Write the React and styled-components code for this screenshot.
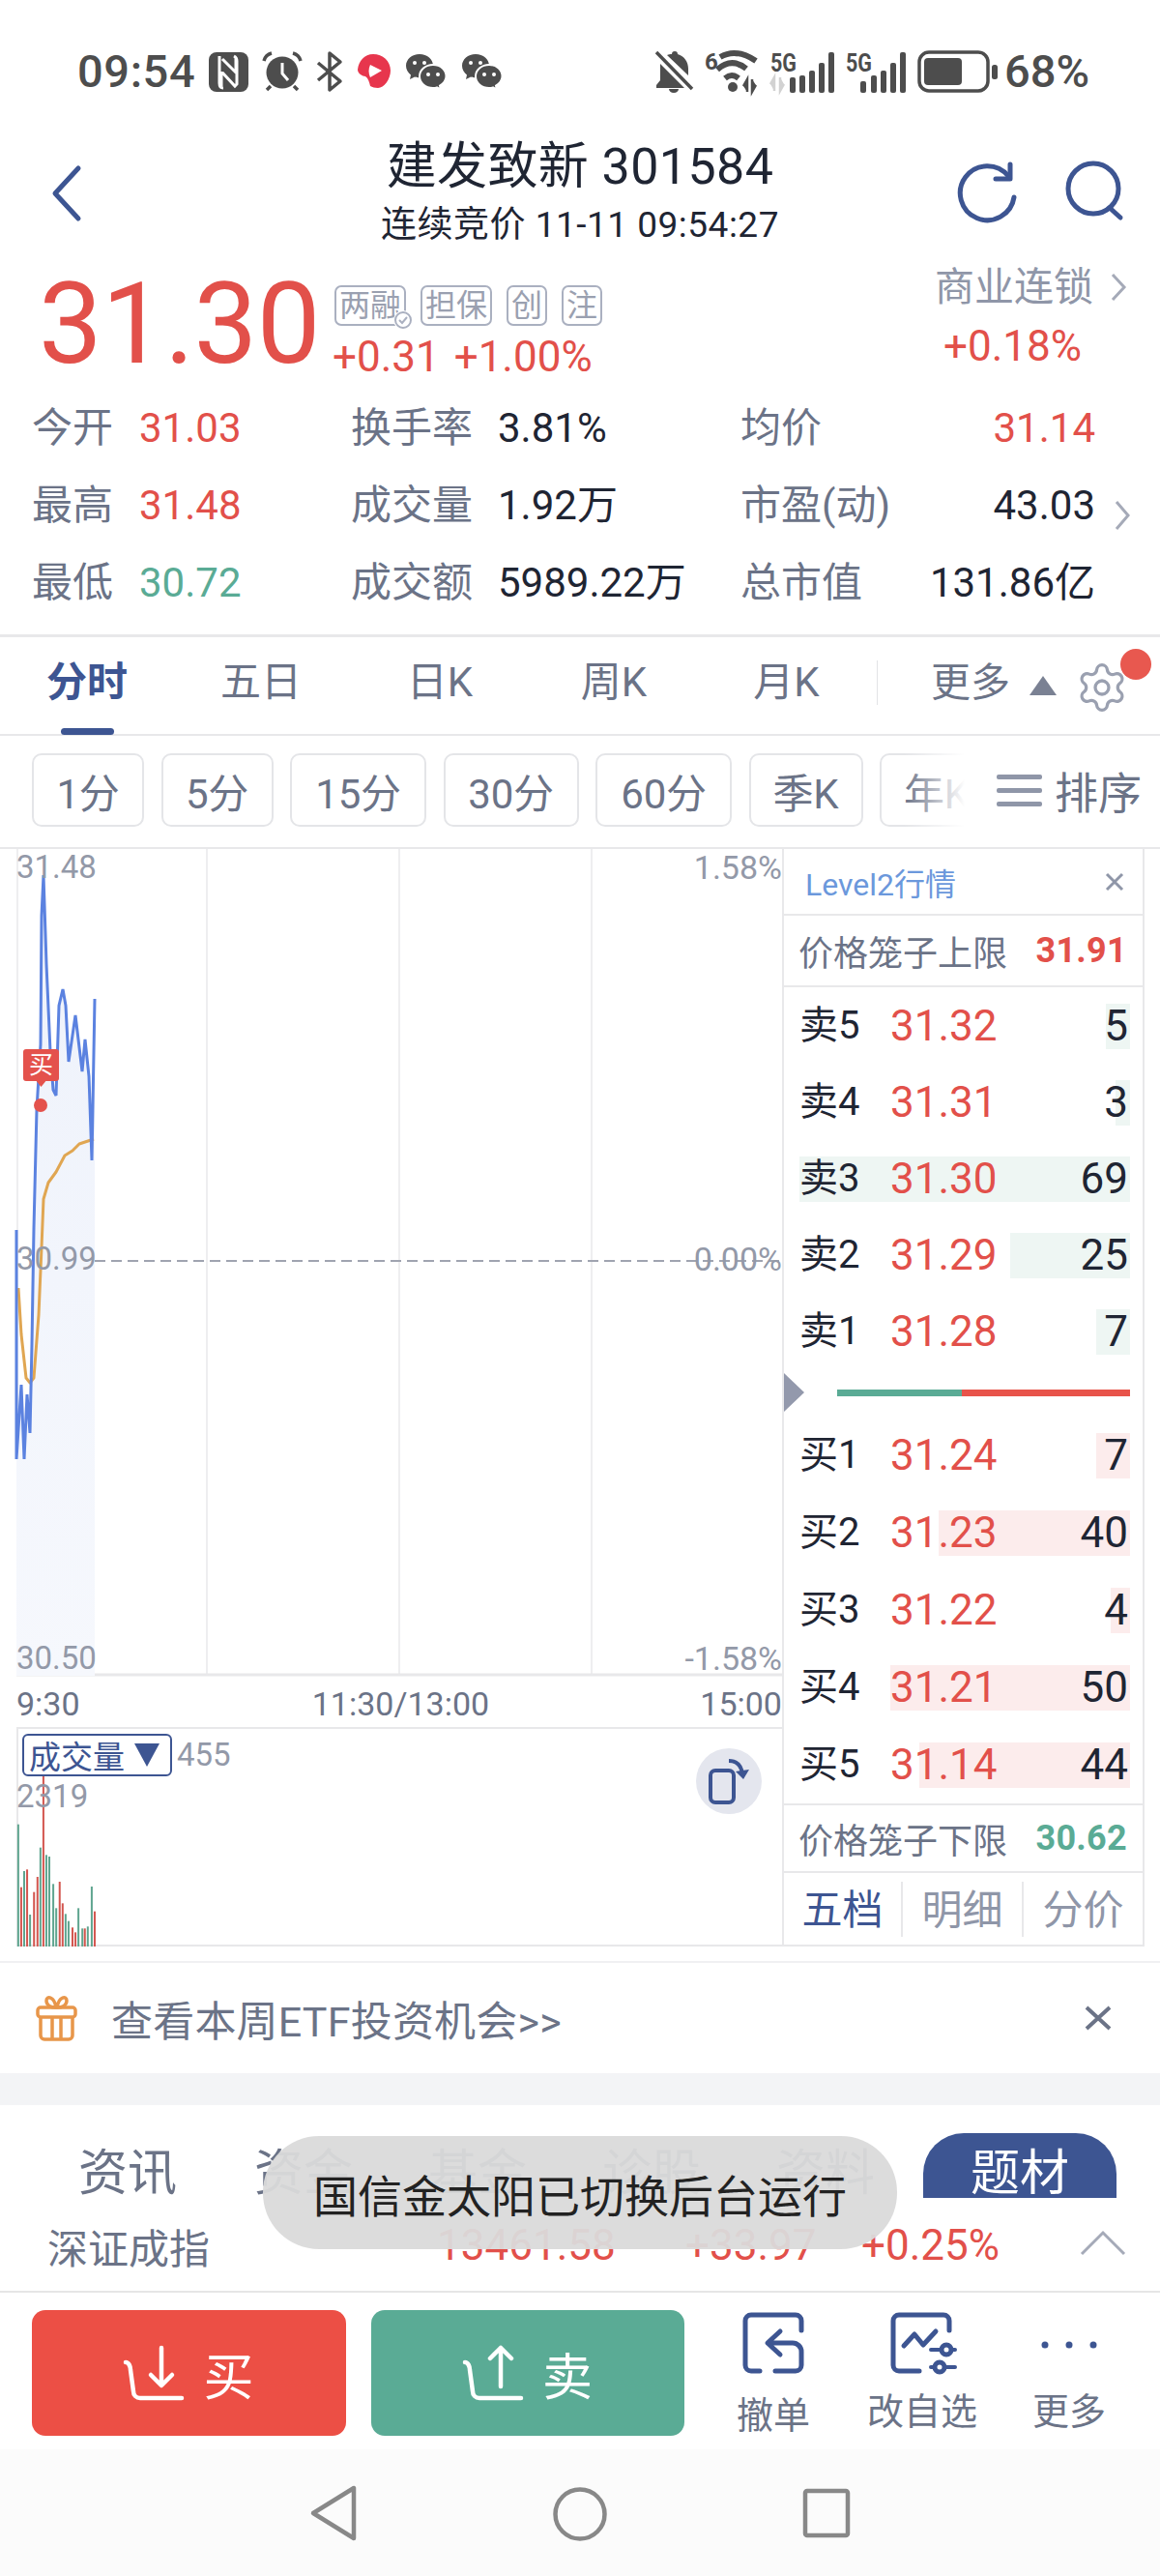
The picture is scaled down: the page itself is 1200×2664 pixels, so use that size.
import React from 'react';
import styled, { createGlobalStyle } from 'styled-components';
import { Settings } from 'lucide-react';

const BLUE = '#3d5592';
const RED = '#e2504a';
const GREEN = '#5aab95';
const GRAY = '#6b7387';
const LIGHT = '#9399a8';
const DARK = '#1f2533';
const LINE = '#e8e8ea';
const ICON = '#4d4d4d';

const Global = createGlobalStyle`
  html, body { margin: 0; padding: 0; background: #fff; }
  * { box-sizing: border-box; }
  body { font-family: Roboto, "Noto Sans CJK SC", sans-serif; }
  svg { overflow: visible; }
`;

const Page = styled.div`
  position: relative; width: 1200px; height: 2664px; overflow: hidden; background: #fff;
`;

/* status bar */
const StatusBar = styled.div`
  height: 148px; padding: 0 73px 0 80px; display: flex; align-items: center; justify-content: space-between; color: ${ICON};
`;
const StatusGroup = styled.div`display: flex; align-items: center; gap: ${p => p.$gap || 14}px;`;
const StatusText = styled.span`
  font-size: 47px; line-height: 50px; font-weight: 500; letter-spacing: ${p => p.$spacing || 0}px; margin-left: ${p => p.$ml || 0}px; color: ${ICON};
`;

/* navigation */
const NavRow = styled.div`position: relative; height: 112px; display: flex; justify-content: center;`;
const TitleBlock = styled.div`display: flex; flex-direction: column; align-items: center;`;
const Title = styled.div`font-size: 52px; line-height: 50px; color: ${DARK}; letter-spacing: .4px; white-space: nowrap;`;
const Subtitle = styled.div`font-size: 37px; line-height: 40px; margin-top: 15px; color: ${DARK}; letter-spacing: .5px; white-space: nowrap;`;
const NavIcon = styled.svg`position: absolute; top: ${p => p.$top}px; left: ${p => p.$left}px; fill: none; stroke: ${BLUE}; stroke-width: 5; stroke-linecap: round; stroke-linejoin: round;`;

/* quote */
const Quote = styled.div`position: relative; height: 142px; padding-left: 40px; display: flex;`;
const BigPrice = styled.div`font-size: 117px; line-height: 150px; color: ${RED}; letter-spacing: -.6px; width: 306px;`;
const QuoteMid = styled.div`padding-top: 35px; display: flex; flex-direction: column;`;
const Badges = styled.div`display: flex; gap: 15px; height: 42px;`;
const Badge = styled.span`
  position: relative; height: 42px; padding: 0 3px; display: flex; align-items: center; border: 2px solid #aab0c0; border-radius: 7px;
  font-size: 32px; line-height: 1; color: #9aa0b0; white-space: nowrap;
`;
const BadgeCheck = styled.svg`position: absolute; right: -9px; bottom: -6px; background: #fff; border-radius: 50%;`;
const Change = styled.div`margin-top: 7px; margin-left: -2px; font-size: 44px; line-height: 50px; color: ${RED}; word-spacing: 4px;`;
const Sector = styled.div`position: absolute; right: 0; top: 14px; width: 232px;`;
const SectorName = styled.div`display: flex; align-items: center; font-size: 41px; line-height: 46px; color: #8f96a8; gap: 18px; margin-left: -1px;`;
const SectorChange = styled.div`margin-top: 15px; padding-left: 8px; font-size: 44px; line-height: 46px; color: ${RED};`;
const Chevron = styled.svg`fill: none; stroke: #a5aab8; stroke-width: 3; flex: none;`;

/* stats */
const Stats = styled.div`padding: 1px 0 13px 33px; border-bottom: 3px solid ${LINE};`;
const StatRow = styled.div`display: flex; height: 80px; align-items: center; font-size: 42px; line-height: 50px;`;
const StatCell = styled.div`display: flex; align-items: center; width: ${p => p.$w}px; flex: none; justify-content: ${p => p.$between ? 'space-between' : 'flex-start'};`;
const StatLabel = styled.span`width: ${p => p.$w ? p.$w + 'px' : 'auto'}; height: 50px; color: ${GRAY}; flex: none;`;
const StatValue = styled.span`height: 50px; color: ${p => p.$c || DARK}; white-space: nowrap;`;
const StatChevron = styled(Chevron)`margin: 20px 0 0 20px;`;

/* period tabs */
const PeriodTabs = styled.div`height: 102px; border-bottom: 2px solid ${LINE}; display: flex; align-items: center; padding-bottom: 6px; position: relative;`;
const PeriodGrid = styled.div`display: grid; grid-template-columns: 180px 180px 190px 170px 187px; flex: none;`;
const Period = styled.div`
  position: relative; text-align: center; font-size: 42px; line-height: 56px; color: ${p => p.$on ? BLUE : GRAY}; font-weight: ${p => p.$on ? 700 : 400};
`;
const ActiveMark = styled.i`position: absolute; left: 63px; bottom: -26px; width: 55px; height: 7px; border-radius: 4px; background: ${BLUE};`;
const VSep = styled.i`width: 1px; height: 46px; background: #e2e3e6; flex: none;`;
const More = styled.div`margin-left: 55px; font-size: 41px; color: ${GRAY}; line-height: 56px;`;
const UpTri = styled.i`margin-left: 20px; margin-top: 6px; width: 0; height: 0; border-left: 14px solid transparent; border-right: 14px solid transparent; border-bottom: 20px solid ${GRAY}; opacity: .9;`;
const Gear = styled.div`margin-left: 19px; margin-top: 10px; color: #9aa0b0; display: flex;`;
const RedDot = styled.i`position: absolute; left: 1159px; top: 12px; width: 32px; height: 32px; border-radius: 50%; background: #e8584f;`;

/* chips */
const ChipRow = styled.div`height: 117px; padding: 18px 0 0 33px; display: flex; border-bottom: 2px solid ${LINE};`;
const ChipClip = styled.div`
  position: relative; width: 972px; height: 78px; overflow: hidden; display: flex; gap: 17.500px; flex: none;
  &::after { content: ''; position: absolute; top: 0; bottom: 0; right: 0; width: 70px; background: linear-gradient(to right, rgba(255,255,255,0), #fff 90%); }
`;
const Chip = styled.div`
  flex: none; width: ${p => p.$w}px; height: 76px; border: 2px solid #e4e5e8; border-radius: 10px; display: flex; align-items: center; justify-content: center;
  font-size: 42px; color: ${GRAY}; letter-spacing: -.3px;
`;
const Sort = styled.div`margin-left: 26px; height: 76px; display: flex; align-items: center; gap: 13px; font-size: 45px; color: ${GRAY}; white-space: nowrap;`;
const SortLines = styled.div`
  width: 47px; display: flex; flex-direction: column; gap: 9px;
  & > i { height: 5px; background: #8f96a8; border-radius: 2px; }
`;

/* chart + book */
const Market = styled.div`height: 1152px; padding: 0 16px 15px 17px; display: flex; border-bottom: 2px solid #f0f0f2;`;
const ChartCol = styled.div`width: 792px; flex: none; display: flex; flex-direction: column;`;
const PriceChart = styled.div`position: relative; height: 855px; flex: none;`;
const ChartSvg = styled.svg`display: block;`;
const Axis = styled.span`
  position: absolute; font-size: ${p => p.$right ? 34 : 33}px; line-height: 36px; color: ${LIGHT};
  top: ${p => p.$top}px; ${p => p.$right ? 'right: 0;' : 'left: 0;'}
`;
const BuyTag = styled.div`
  position: absolute; left: 7px; top: 207px; width: 37px; height: 33px; background: #e4524c; border-radius: 3px; color: #fff;
  font-size: 25px; line-height: 33px; text-align: center;
  &::after { content: ''; position: absolute; left: 12px; top: 31px; width: 13px; height: 8px; background: #e4524c; clip-path: polygon(0 0, 100% 0, 50% 100%); }
`;
const TimeAxis = styled.div`height: 53px; display: flex; justify-content: space-between; align-items: center; font-size: 34px; color: ${GRAY}; padding-top: 4px;`;
const AxisMid = styled.span`margin-left: 22px;`;
const VolumeBox = styled.div`position: relative; height: 227px; flex: none;`;
const VolumeSelect = styled.div`
  position: absolute; left: 6px; top: 7px; width: 155px; height: 44px; border: 2px solid ${BLUE}; border-radius: 6px; background: #fff;
  display: flex; align-items: center; padding-left: 5px; gap: 10px; font-size: 33px; color: ${BLUE};
`;
const DownTri = styled.i`flex: none; width: 0; height: 0; border-left: 13px solid transparent; border-right: 13px solid transparent; border-top: 24px solid ${BLUE};`;
const VolLabel = styled.span`position: absolute; left: ${p => p.$left}px; top: ${p => p.$top}px; font-size: 33px; line-height: 36px; color: ${LIGHT};`;
const RotateBtn = styled.div`position: absolute; left: 703px; top: 22px; width: 68px; height: 68px; border-radius: 50%; background: #e4e6ee; display: flex; align-items: center; justify-content: center;`;

const Book = styled.div`width: 375px; height: 1135px; flex: none; border: solid ${LINE}; border-width: 0 2px 2px 2px; display: flex; flex-direction: column;`;
const BookHead = styled.div`height: 69px; padding: 0 19px 0 22px; display: flex; align-items: center; justify-content: space-between; border-bottom: 2px solid ${LINE}; font-size: 32px; color: #6b98dc;`;
const LimitRow = styled.div`height: ${p => p.$h}px; padding: 0 16px 0 15px; display: flex; align-items: center; justify-content: space-between; flex: none; border-bottom: 2px solid ${LINE}; border-top: ${p => p.$top ? `2px solid ${LINE}` : 'none'}; font-size: 36px; color: ${GRAY};`;
const LimitValue = styled.span`font-size: 36px; font-weight: 700; letter-spacing: .3px; color: ${p => p.$c};`;
const Level = styled.div`position: relative; height: ${p => p.$h}px; flex: none; padding: 0 15px 0 16px; display: flex; align-items: center; color: ${DARK};`;
const LevelBar = styled.i`position: absolute; right: 13px; top: 50%; height: 47px; margin-top: -23px; background: ${p => p.$sell ? '#eef6f3' : '#fcecec'};`;
const LevelName = styled.span`position: relative; width: 94px; flex: none; font-size: 40px; line-height: 48px;`;
const LevelPrice = styled.span`position: relative; font-size: 44px; line-height: 48px; color: ${RED};`;
const LevelQty = styled.span`position: relative; margin-left: auto; font-size: 44px; line-height: 48px;`;
const Ratio = styled.div`position: relative; height: 49px; flex: none; padding-left: 55px; padding-right: 13px; display: flex; align-items: center;`;
const RatioTri = styled.i`position: absolute; left: 0; top: 4px; width: 0; height: 0; border-top: 20px solid transparent; border-bottom: 20px solid transparent; border-left: 21px solid #9399ac;`;
const RatioPart = styled.i`height: 7px; background: ${p => p.$c}; flex: ${p => p.$f};`;
const BookTabs = styled.div`flex: 1; display: grid; grid-template-columns: 123px 125px 1fr; align-items: center;`;
const BookTab = styled.div`height: 57px; font-size: 42px; line-height: 60px; text-align: center; color: ${p => p.$on ? BLUE : '#8f96a8'}; border-right: ${p => p.$sep ? `2px solid ${LINE}` : 'none'};`;

/* banner */
const Banner = styled.div`height: 114px; padding: 0 50px 0 37px; display: flex; align-items: center; font-size: 43px; color: ${GRAY};`;
const BannerText = styled.span`margin-left: 35px; flex: 1; letter-spacing: .2px;`;
const GrayBand = styled.div`height: 33px; background: #f3f4f6;`;

/* info tabs */
const InfoTabs = styled.div`position: relative; height: 96px; overflow: hidden; font-size: 51px; color: ${GRAY};`;
const InfoTabRow = styled.div`display: grid; grid-template-columns: 182px 180px 180px 180px 180px 1fr; padding-left: 81px; padding-top: 46px; line-height: 50px;`;
const Pill = styled.div`margin: -17px 45px 0 -28px; height: 67px; padding-top: 17px; background: ${BLUE}; color: #fff; border-radius: 42px 42px 0 0; text-align: center;`;
const IndexRow = styled.div`height: 98px; padding: 2px 35px 0 49px; display: flex; align-items: center; font-size: 44px; color: ${RED}; border-bottom: 2px solid #e6e6e6; background: #fff;`;
const IndexName = styled.span`width: 403px; font-size: 42px; color: ${GRAY}; flex: none;`;
const IndexValue = styled.span`width: ${p => p.$w}px; flex: none; white-space: nowrap;`;
const UpChevron = styled.svg`margin-left: auto; fill: none; stroke: #a5aab8; stroke-width: 3; margin-top: -4px;`;

/* toast */
const Toast = styled.div`
  position: absolute; left: 272px; top: 2209px; width: 656px; height: 117px; border-radius: 58px; background: rgba(218,218,218,.95);
  display: flex; align-items: center; justify-content: center; font-size: 46px; color: #222;
`;

/* trade bar */
const TradeBar = styled.div`height: 162px; padding: 18px 0 0 33px; display: flex;`;
const TradeBtn = styled.div`
  width: ${p => p.$w}px; height: 130px; flex: none; margin-right: ${p => p.$mr}px; border-radius: 14px; background: ${p => p.$c};
  display: flex; align-items: center; justify-content: center; gap: 18px; font-size: 52px; color: #fff;
`;
const TradeItem = styled.div`width: ${p => p.$w}px; flex: none; margin-left: ${p => p.$ml || 0}px; display: flex; flex-direction: column; align-items: center; font-size: 38px; line-height: 46px; color: ${GRAY}; white-space: nowrap;`;
const TradeIcon = styled.svg`height: 68px; fill: none; stroke: ${BLUE}; stroke-width: 5; stroke-linecap: round; stroke-linejoin: round; margin-bottom: ${p => p.$mb}px;`;

/* nav */
const SystemNav = styled.div`height: 131px; background: #fbfbfb; position: relative;`;
const SysIcon = styled.svg`position: absolute; left: ${p => p.$left}px; top: ${p => p.$top}px; fill: none; stroke: #888; stroke-width: 4.5; stroke-linejoin: round;`;

const pricePts = [[17,1272],[17,1509],[22,1432],[25,1509],[28,1442],[31,1482],[33,1390],[35,1270],[38,1147],[42,1080],[43,947],[45,905],[48,997],[52,1087],[55,1127],[58,1133],[61,1040],[65,1023],[68,1040],[71,1098],[78,1050],[85,1108],[88,1075],[92,1113],[95,1200],[98,1033]];
const avgPts = [[19,1332],[22,1380],[27,1425],[31,1430],[35,1425],[40,1360],[43,1290],[45,1240],[50,1223],[58,1212],[67,1195],[75,1190],[82,1183],[97,1178]];
const toStr = a => a.map(p => p.join(',')).join(' ');

const bars = [[37,560,'g'],[43,755,'r'],[49,705,'g'],[55,700,'r'],[61,840,'g'],[69,770,'r'],[76,723,'r'],[82,632,'g'],[88,400,'r'],[94,655,'g'],[100,660,'g'],[108,745,'g'],[114,820,'g'],[121,738,'r'],[127,805,'r'],[133,838,'g'],[139,860,'g'],[147,880,'r'],[153,895,'r'],[159,820,'g'],[167,883,'g'],[172,883,'r'],[178,877,'g'],[186,753,'g'],[192,830,'r']];

const sells = [['卖5','31.32','5',25],['卖4','31.31','3',15],['卖3','31.30','69',342],['卖2','31.29','25',124],['卖1','31.28','7',35]];
const buys = [['买1','31.24','7',35],['买2','31.23','40',198],['买3','31.22','4',20],['买4','31.21','50',248],['买5','31.14','44',218]];

const Wechat = () => (
  <svg width="44" height="38" viewBox="0 0 44 38">
    <path d="M15 1C7 1 1 6.500 1 13c0 4 2 7 5 9.500L5 27l5-2.500c2 .6 3 .8 5 .8C23 25.300 29 20 29 13S23 1 15 1Z" fill={ICON} />
    <path d="M29 12c-8 0-14 5.500-14 12s6 12 14 12c1.600 0 2.800-.2 4-.6l4 2.300-1-4c3.500-2.200 6.500-5.500 6.500-9.700C42.500 17.500 37 12 29 12Z" fill={ICON} stroke="#fff" strokeWidth="2" />
    <circle cx="10" cy="10" r="2" fill="#fff" /><circle cx="20" cy="10" r="2" fill="#fff" />
    <circle cx="24" cy="22" r="2" fill="#fff" /><circle cx="34" cy="22" r="2" fill="#fff" />
  </svg>
);

const Signal = ({ dim }) => (
  <svg width={dim ? 67 : 63} height="44" viewBox={dim ? '0 0 67 44' : '0 0 63 44'}>
    <text x="0" y="22" fontFamily="Roboto" fontWeight="700" fontSize="26" fill={ICON} textLength="27" lengthAdjust="spacingAndGlyphs">5G</text>
    {dim && <path d="M4 42V28l-4 7M10 28v14l4-7" fill="#d2d2d2" stroke="#d2d2d2" strokeWidth="2.500" />}
    {(dim ? [20,30,40,50,60] : [15,26,36,46,56]).map((x, i) => {
      const top = dim ? [28,26,21,13,2][i] : [32,26,21,13,2][i];
      return <rect key={x} x={x} y={top} width="6" height={44 - top} rx="2" fill={ICON} />;
    })}
  </svg>
);

export default function App() {
  return (
    <Page>
      <Global />
      <StatusBar>
        <StatusGroup $gap={14}>
          <StatusText $spacing={.6}>09:54</StatusText>
          <svg width="41" height="41" viewBox="0 0 41 41">
            <rect width="41" height="41" rx="8" fill={ICON} />
            <path d="M11 4v28c0 3 1 5 4 5M14 7l14 14v-16M13 20v15M14 21l13 14 2-2V9c0-3-1-4-3-5" fill="none" stroke="#fff" strokeWidth="3" />
          </svg>
          <svg width="42" height="42" viewBox="0 0 42 42">
            <circle cx="21" cy="22" r="16.500" fill={ICON} />
            <path d="M21 12v11l6 7" fill="none" stroke="#fff" strokeWidth="3" />
            <path d="M2 10c1-4 4-7 8-8M40 10c-1-4-4-7-8-8M9 36l-4 4M33 36l4 4" fill="none" stroke={ICON} strokeWidth="3.500" />
          </svg>
          <svg width="28" height="42" viewBox="0 0 28 42">
            <path d="M2 12l23 19-11 9V2l11 9L2 30" fill="none" stroke={ICON} strokeWidth="3.500" strokeLinejoin="round" />
          </svg>
          <svg width="36" height="38" viewBox="0 0 36 38">
            <path d="M17 1c10 0 18 7 18 17 0 9-7 18-13 18-3 0-6-1-8-2-1-4-2-8-5-10-3 0-8-3-8-7C2 8 8 1 17 1Z" fill="#e7364d" />
            <path d="M14 12l12 6-12 7c-2-4-2-9 0-13Z" fill="#fff" />
          </svg>
          <Wechat />
          <Wechat />
        </StatusGroup>
        <StatusGroup $gap={11}>
          <svg width="40" height="44" viewBox="0 0 40 44">
            <path d="M20 1c2 0 3 1 3 3 7 2 11 8 11 15v7L12 5c2-1 3-1 5-1 0-2 1-3 3-3ZM5 14l25 25H1v-3l4-5V14ZM14 40h10c0 2-2 4-5 4s-5-2-5-4Z" fill={ICON} />
            <path d="M1 2l37 38" stroke={ICON} strokeWidth="3.500" /><path d="M5 0l37 38" stroke="#fff" strokeWidth="2" />
          </svg>
          <svg width="57" height="44" viewBox="0 0 57 44">
            <text x="0" y="20" fontFamily="Roboto" fontWeight="700" fontSize="24" fill={ICON}>6</text>
            <path d="M16 7c10-6 22-6 37 4M13 20c10-9 20-9 30-1M21 29c5-4 9-4 14 0" fill="none" stroke={ICON} strokeWidth="6" />
            <circle cx="29" cy="38" r="5" fill={ICON} />
            <path d="M44 43V30l-4 7M49 30v13l4-7" fill={ICON} stroke={ICON} strokeWidth="2.500" />
          </svg>
          <Signal dim />
          <Signal />
          <svg width="84" height="44" viewBox="0 0 84 44">
            <rect x="2" y="2" width="71" height="40" rx="10" fill="none" stroke={ICON} strokeWidth="3.500" />
            <rect x="7" y="8" width="39" height="28" rx="4" fill={ICON} />
            <rect x="77" y="15" width="6" height="15" rx="2.500" fill={ICON} />
          </svg>
          <StatusText $ml={-5}>68%</StatusText>
        </StatusGroup>
      </StatusBar>

      <NavRow>
        <NavIcon $left={52} $top={22} width="34" height="60" viewBox="0 0 34 60"><path d="M29 4L5 30l24 26" /></NavIcon>
        <TitleBlock>
          <Title>建发致新 301584</Title>
          <Subtitle>连续竞价 11-11 09:54:27</Subtitle>
        </TitleBlock>
        <NavIcon $left={990} $top={20} width="66" height="64" viewBox="0 0 66 64">
          <path d="M53 14A28 28 0 1 0 59 36" />
          <path d="M55 2v15H40" />
        </NavIcon>
        <NavIcon $left={1100} $top={17} width="66" height="66" viewBox="0 0 66 66">
          <circle cx="31" cy="30" r="26" />
          <path d="M48 50l11 10" />
        </NavIcon>
      </NavRow>

      <Quote>
        <BigPrice>31.30</BigPrice>
        <QuoteMid>
          <Badges>
            <Badge>两融<BadgeCheck width="20" height="20" viewBox="0 0 20 20"><circle cx="10" cy="10" r="8" fill="#fff" stroke="#aab0c0" strokeWidth="2" /><path d="M6 10l3 3 5-6" fill="none" stroke="#aab0c0" strokeWidth="2" /></BadgeCheck></Badge>
            <Badge>担保</Badge>
            <Badge>创</Badge>
            <Badge>注</Badge>
          </Badges>
          <Change>+0.31 +1.00%</Change>
        </QuoteMid>
        <Sector>
          <SectorName>商业连锁
            <Chevron width="16" height="30" viewBox="0 0 16 30"><path d="M2 2l12 13L2 28" /></Chevron>
          </SectorName>
          <SectorChange>+0.18%</SectorChange>
        </Sector>
      </Quote>

      <Stats>
        <StatRow>
          <StatCell $w={330}><StatLabel $w={111}>今开</StatLabel><StatValue $c={RED}>31.03</StatValue></StatCell>
          <StatCell $w={403}><StatLabel $w={152}>换手率</StatLabel><StatValue>3.81%</StatValue></StatCell>
          <StatCell $w={367} $between><StatLabel>均价</StatLabel><StatValue $c={RED}>31.14</StatValue></StatCell>
        </StatRow>
        <StatRow>
          <StatCell $w={330}><StatLabel $w={111}>最高</StatLabel><StatValue $c={RED}>31.48</StatValue></StatCell>
          <StatCell $w={403}><StatLabel $w={152}>成交量</StatLabel><StatValue>1.92万</StatValue></StatCell>
          <StatCell $w={367} $between><StatLabel>市盈(动)</StatLabel><StatValue>43.03</StatValue></StatCell>
          <StatChevron width="16" height="32" viewBox="0 0 16 32"><path d="M2 2l12 14L2 30" /></StatChevron>
        </StatRow>
        <StatRow>
          <StatCell $w={330}><StatLabel $w={111}>最低</StatLabel><StatValue $c={GREEN}>30.72</StatValue></StatCell>
          <StatCell $w={403}><StatLabel $w={152}>成交额</StatLabel><StatValue>5989.22万</StatValue></StatCell>
          <StatCell $w={367} $between><StatLabel>总市值</StatLabel><StatValue>131.86亿</StatValue></StatCell>
        </StatRow>
      </Stats>

      <PeriodTabs>
        <PeriodGrid>
          <Period $on>分时<ActiveMark /></Period>
          <Period>五日</Period>
          <Period>日K</Period>
          <Period>周K</Period>
          <Period>月K</Period>
        </PeriodGrid>
        <VSep />
        <More>更多</More>
        <UpTri />
        <Gear><Settings size={56} strokeWidth={1.4} /></Gear>
        <RedDot />
      </PeriodTabs>

      <ChipRow>
        <ChipClip>
          <Chip $w={116}>1分</Chip>
          <Chip $w={116}>5分</Chip>
          <Chip $w={141}>15分</Chip>
          <Chip $w={140}>30分</Chip>
          <Chip $w={141}>60分</Chip>
          <Chip $w={118}>季K</Chip>
          <Chip $w={118}>年K</Chip>
        </ChipClip>
        <Sort><SortLines><i /><i /><i /></SortLines>排序</Sort>
      </ChipRow>

      <Market>
        <ChartCol>
          <PriceChart>
            <ChartSvg width="792" height="855" viewBox="17 878 792 855">
              <defs>
                <linearGradient id="areaFill" x1="0" y1="0" x2="0" y2="1">
                  <stop offset="0" stopColor="#eef2fb" />
                  <stop offset="1" stopColor="#f6f8fd" />
                </linearGradient>
              </defs>
              <path d="M18 878V1733M214 878V1733M413 878V1733M612 878V1733" stroke="#eeeef0" strokeWidth="2" fill="none" />
              <path d="M17 1732H809" stroke="#e8e8ea" strokeWidth="3" />
              <polygon points={`${toStr(pricePts)} 98,1733 17,1733`} fill="url(#areaFill)" />
              <path d="M98 1304H809" stroke="#a0a4b0" strokeWidth="2" strokeDasharray="11 6" fill="none" />
              <polyline points={toStr(avgPts)} fill="none" stroke="#e0a652" strokeWidth="3" strokeLinejoin="round" />
              <polyline points={toStr(pricePts)} fill="none" stroke="#5b82e0" strokeWidth="3" strokeLinejoin="miter" />
              <circle cx="42" cy="1143" r="7" fill="#e4524c" />
            </ChartSvg>
            <Axis $top={1}>31.48</Axis>
            <Axis $top={1} $right>1.58%</Axis>
            <Axis $top={406}>30.99</Axis>
            <Axis $top={406} $right>0.00%</Axis>
            <Axis $top={819}>30.50</Axis>
            <Axis $top={819} $right>-1.58%</Axis>
            <BuyTag>买</BuyTag>
          </PriceChart>
          <TimeAxis><span>9:30</span><AxisMid>11:30/13:00</AxisMid><span>15:00</span></TimeAxis>
          <VolumeBox>
            <ChartSvg width="792" height="227" viewBox="17 1786 792 227">
              <path d="M17 1787H809M17 2012H809M18 1786V2012" stroke="#e8e8ea" strokeWidth="2" fill="none" />
              {bars.map(([x, y, c]) => (
                <rect key={x} x={x / 1.96 - 1} y={1700 + y / 3} width="2" height={2013 - (1700 + y / 3)} fill={c === 'g' ? '#5fa58f' : '#d3564f'} />
              ))}
            </ChartSvg>
            <VolLabel $left={0} $top={54}>2319</VolLabel>
            <VolLabel $left={166} $top={11}>455</VolLabel>
            <VolumeSelect>成交量<DownTri /></VolumeSelect>
            <RotateBtn>
              <svg width="44" height="48" viewBox="0 0 44 48">
                <rect x="3" y="13" width="24" height="33" rx="5" fill="none" stroke={BLUE} strokeWidth="4" />
                <path d="M22 3c8 0 13 5 14 14" fill="none" stroke={BLUE} strokeWidth="4" />
                <path d="M29 14l8 8 6-10Z" fill={BLUE} />
              </svg>
            </RotateBtn>
          </VolumeBox>
        </ChartCol>
        <Book>
          <BookHead>Level2行情
            <svg width="20" height="20" viewBox="0 0 20 20"><path d="M2 2l16 16M18 2L2 18" stroke="#8f96a8" strokeWidth="3" /></svg>
          </BookHead>
          <LimitRow $h={74}>价格笼子上限<LimitValue $c={RED}>31.91</LimitValue></LimitRow>
          {sells.map(([n, p, q, w]) => (
            <Level key={n} $h={79}>
              <LevelBar $sell style={{ width: w }} />
              <LevelName>{n}</LevelName><LevelPrice>{p}</LevelPrice><LevelQty>{q}</LevelQty>
            </Level>
          ))}
          <Ratio><RatioTri /><RatioPart $c={GREEN} $f={129} /><RatioPart $c="#e8534a" $f={173} /></Ratio>
          {buys.map(([n, p, q, w]) => (
            <Level key={n} $h={80}>
              <LevelBar style={{ width: w }} />
              <LevelName>{n}</LevelName><LevelPrice>{p}</LevelPrice><LevelQty>{q}</LevelQty>
            </Level>
          ))}
          <LimitRow $h={72} $top>价格笼子下限<LimitValue $c={GREEN}>30.62</LimitValue></LimitRow>
          <BookTabs>
            <BookTab $on $sep>五档</BookTab>
            <BookTab $sep>明细</BookTab>
            <BookTab>分价</BookTab>
          </BookTabs>
        </Book>
      </Market>

      <Banner>
        <svg width="43" height="48" viewBox="0 0 43 48" fill="none" stroke="#e8964a" strokeWidth="3.500" strokeLinejoin="round">
          <path d="M21 13c-5 0-10-2-10-7 0-5 8-5 10 7ZM22 13c5 0 10-2 10-7 0-5-8-5-10 7Z" />
          <rect x="2" y="13" width="39" height="10" rx="3" />
          <path d="M5 23v19a4 4 0 0 0 4 4h25a4 4 0 0 0 4-4V23M17 23v23M26 23v23" />
        </svg>
        <BannerText>查看本周ETF投资机会&gt;&gt;</BannerText>
        <svg width="28" height="26" viewBox="0 0 28 26"><path d="M2 2l24 22M26 2L2 24" stroke={GRAY} strokeWidth="4" /></svg>
      </Banner>
      <GrayBand />

      <InfoTabs>
        <InfoTabRow>
          <span>资讯</span><span>资金</span><span>基金</span><span>诊股</span><span>资料</span>
          <Pill>题材</Pill>
        </InfoTabRow>
      </InfoTabs>
      <IndexRow>
        <IndexName>深证成指</IndexName>
        <IndexValue $w={257}>13461.58</IndexValue>
        <IndexValue $w={182}>+33.97</IndexValue>
        <IndexValue $w={160}>+0.25%</IndexValue>
        <UpChevron width="48" height="26" viewBox="0 0 48 26"><path d="M2 24L24 2l22 22" /></UpChevron>
      </IndexRow>

      <TradeBar>
        <TradeBtn $w={325} $c="#ec4f45" $mr={26}>
          <svg width="64" height="58" viewBox="0 0 64 58" fill="none" stroke="#fff" strokeWidth="4.500" strokeLinecap="round" strokeLinejoin="round">
            <path d="M2 18c3 0 5 4 5 8l3 22c0 4 3 7 7 7h43" />
            <path d="M39 3v38M28 31l11 11 11-11" />
          </svg>
          买
        </TradeBtn>
        <TradeBtn $w={324} $c="#5aab95" $mr={50}>
          <svg width="64" height="58" viewBox="0 0 64 58" fill="none" stroke="#fff" strokeWidth="4.500" strokeLinecap="round" strokeLinejoin="round">
            <path d="M2 18c3 0 5 4 5 8l3 22c0 4 3 7 7 7h43" />
            <path d="M39 43V3M28 14L39 3l11 11" />
          </svg>
          卖
        </TradeBtn>
        <TradeItem $w={84}>
          <TradeIcon width="64" viewBox="0 0 64 68" $mb={18}>
            <path d="M18 63H9a6 6 0 0 1-6-6V11a6 6 0 0 1 6-6h46a6 6 0 0 1 6 6v10M34 63h21a6 6 0 0 0 6-6V43a9 9 0 0 0-9-9H30M39 22L26 34l13 12" />
          </TradeIcon>
          撤单
        </TradeItem>
        <TradeItem $w={114} $ml={55}>
          <TradeIcon width="66" viewBox="0 0 66 68" $mb={14}>
            <path d="M30 63H9a6 6 0 0 1-6-6V11a6 6 0 0 1 6-6h46a6 6 0 0 1 6 6v10M14 37l11-12 9 11 13-14" />
            <path d="M42 41h10M64 41h3M42 59h3M57 59h10" strokeWidth="4" />
            <circle cx="58" cy="41" r="5" /><circle cx="51" cy="59" r="5" />
          </TradeIcon>
          改自选
        </TradeItem>
        <TradeItem $w={76} $ml={57}>
          <TradeIcon width="62" viewBox="0 0 62 68" $mb={14}>
            <circle cx="6" cy="36" r="3.500" fill={BLUE} stroke="none" />
            <circle cx="31" cy="36" r="3.500" fill={BLUE} stroke="none" />
            <circle cx="56" cy="36" r="3.500" fill={BLUE} stroke="none" />
          </TradeIcon>
          更多
        </TradeItem>
      </TradeBar>

      <SystemNav>
        <SysIcon $left={320} $top={37} width="50" height="58" viewBox="0 0 50 58"><path d="M46 3v52L4 29Z" /></SysIcon>
        <SysIcon $left={571} $top={38} width="58" height="58" viewBox="0 0 58 58"><circle cx="29" cy="29" r="25.500" /></SysIcon>
        <SysIcon $left={830} $top={40} width="50" height="52" viewBox="0 0 50 52"><rect x="3" y="3" width="44" height="46" rx="2" /></SysIcon>
      </SystemNav>

      <Toast>国信金太阳已切换后台运行</Toast>
    </Page>
  );
}
